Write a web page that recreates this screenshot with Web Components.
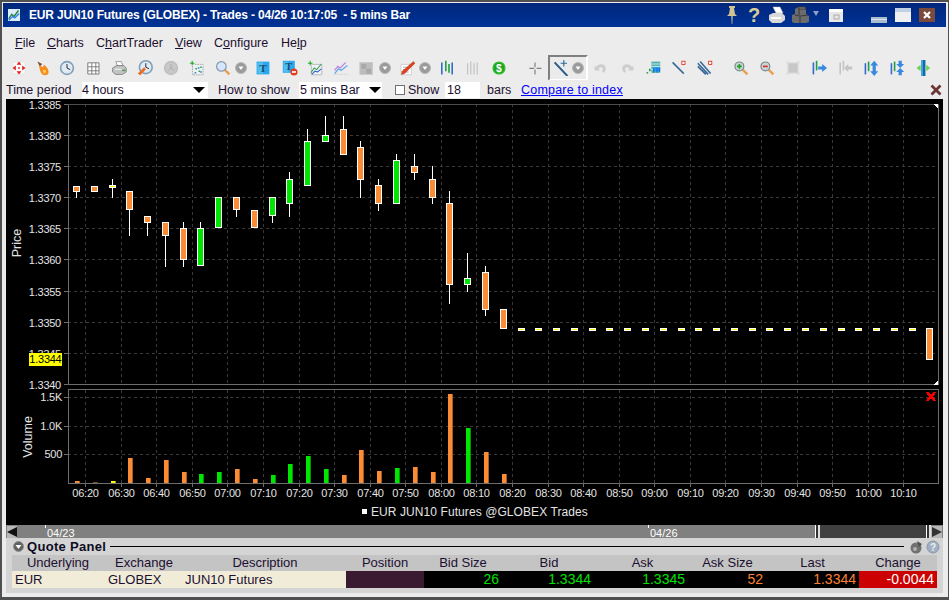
<!DOCTYPE html>
<html><head><meta charset="utf-8"><title>Trades</title>
<style>html,body{margin:0;padding:0;background:#505050;overflow:hidden}</style></head>
<body>
<trade-window>
  <title-bar slot="title">EUR JUN10 Futures (GLOBEX) - Trades - 04/26 10:17:05&nbsp; - 5 mins Bar</title-bar>
  <menu-bar slot="menu"></menu-bar>
  <tool-bar slot="tools"></tool-bar>
  <control-bar slot="controls"></control-bar>
  <price-chart slot="chart"></price-chart>
  <time-scroller slot="scroll"></time-scroller>
  <quote-panel slot="quote"></quote-panel>
</trade-window>
<script>
const FONT='"Liberation Sans",Arial,sans-serif';
const plus=(x,y)=>`<path d="M${x-1} ${y-3}h2v2h2v2h-2v2h-2v-2h-2v-2h2z" fill="#28a828" stroke="#fff" stroke-width=".5"/>`;
const dd=`<circle cx="7" cy="10" r="5.5" fill="#9a9a9a" stroke="#b8b8b8"/><path d="M4.5 8.5h5L7 12z" fill="#fff"/>`;
const bars=(a,b)=>`<path d="M3.5 3v15" stroke="${a}" stroke-width="2"/><path d="M8.5 1v13M12.5 5v11" stroke="${b}" stroke-width="2"/>`;
const lens=(extra)=>`<path d="M12 12l6 6" stroke="#e8a050" stroke-width="3"/><circle cx="8" cy="8" r="5.5" fill="#c8d4d8" stroke="#7a8a8a" stroke-width="1.5"/>${extra}`;
const ICONS={
move:`<rect x="2.5" y="2.5" width="15" height="15" fill="#fafafa" stroke="#e2e2e2"/><path fill="#e02020" d="M10 2l3 4H7zM10 18l-3-4h6zM2 10l4-3v6zM18 10l-4 3V7z"/><rect x="9" y="9" width="2" height="2" fill="#e02020"/>`,
flame:`<path d="M3 2l6 3-3 3z" fill="#7a4a30"/><path d="M5 7c2 0 3 2 5 2l1-3c3 2 6 5 6 9 0 3-2 4-5 4-4 0-6-5-7-12z" fill="#f58a1f"/><path d="M10 12c1 1 3 1 3 0 1 2 1 5-1 5-2 0-2-3-2-5z" fill="#ffd060"/>`,
clock:`<circle cx="10" cy="10" r="8" fill="#dfeaf3" stroke="#7f9fb8" stroke-width="2"/><path d="M10 5v5l4 2" fill="none" stroke="#223" stroke-width="1.2"/>`,
grid:`<path d="M3.5 3.5h14v14h-14zM8.5 3.5v14M13.5 3.5v14M3.5 8.5h14M3.5 13.5h14" fill="#fff" stroke="#666"/>`,
printer:`<path fill="#fff" stroke="#888" d="M6 2h7l2 5H8z"/><path fill="#c4c4c4" stroke="#777" d="M2 10l5-3h9l3 3v5l-5 3H6l-4-3z"/><path fill="#49a049" d="M14 12h4v2h-4z"/><path fill="#fff" d="M5 11h8v1H5z"/>`,
clockor:`<circle cx="11" cy="9" r="8" fill="#dfeaf3" stroke="#7f9fb8" stroke-width="2"/><path d="M11 4v5l4 2" fill="none" stroke="#223" stroke-width="1.2"/><path d="M1 17l8-8 2 3-7 7z" fill="#f06a20"/>`,
gclock:`<circle cx="10" cy="10" r="8" fill="#c8c8c8" stroke="#c0c0c0" stroke-width="2"/><path d="M10 5v5l-3 3M10 10l4 3" fill="none" stroke="#aaa" stroke-width="1.2"/>`,
scatter:`<path d="M4.5 5.5h13v13h-13z" fill="#eef2f6" stroke="#9a9a9a" stroke-dasharray="2 1"/><path d="M7 15h2v2H7zM11 9h2v2h-2zM14 14h2v2h-2z" fill="#2a8ad0"/><path d="M8 10h2v2H8zM12 13h2v2h-2zM14 8h2v2h-2z" fill="#30a050"/>${plus(4,4)}`,
mag:`<path d="M12 12l6 6" stroke="#e8a050" stroke-width="3"/><circle cx="8" cy="8" r="6" fill="#d4e6ff" stroke="#8a9aa8" stroke-width="1.5"/>`,
T:`<rect x="2" y="2" width="16" height="16" fill="#2aa8ee"/><rect x="3" y="3" width="7" height="14" fill="#4cc0f6"/><text x="10" y="15" text-anchor="middle" font-family="Liberation Serif" font-weight="700" font-size="14" fill="#204a68">T</text>`,
Tm:`<rect x="1" y="1" width="15" height="15" fill="#2aa8ee"/><rect x="2" y="2" width="6" height="13" fill="#4cc0f6"/><text x="8.5" y="13" text-anchor="middle" font-family="Liberation Serif" font-weight="700" font-size="13" fill="#204a68">T</text><circle cx="15" cy="15" r="4.5" fill="#e04020"/><path d="M12.5 14h5v2h-5z" fill="#fff"/>`,
chartp:`<path d="M5.5 5.5h13v13h-13z" fill="#eef2f6" stroke="#b0b0b0"/><path d="M5 16l4-6 3 2 6-7" fill="none" stroke="#30a050" stroke-width="1.3"/><path d="M6 18l4-4 3 1 5-4" fill="none" stroke="#3060d0" stroke-width="1.3"/>${plus(4,4)}`,
chartv:`<path d="M2 13l4-5 3 2 7-7" fill="none" stroke="#c080e0" stroke-width="1.6"/><path d="M2 17l5-6 3 2 8-6" fill="none" stroke="#60a8f0" stroke-width="1.6"/><path d="M1 18h18" stroke="#d8d8d8"/>`,
gsq:`<rect x="1" y="3" width="16" height="15" fill="#bcbcbc" stroke="#c8c8c8"/><path d="M3 5h6v6H3zM9 11h6v6H9z" fill="#a8a8a8"/>`,
pencil:`<path d="M2.5 5.5h13v13h-13z" fill="#fff" stroke="#c8c8c8"/><path d="M5 15h7M5 12h5M5 9h5" stroke="#9a9a9a"/><path d="M18 2l2 2L7 17l-4 1 1-4z" fill="#e0401c" stroke="#9a2a10" stroke-width=".5"/>`,
barsc:bars('#3868d0','#20a040')+`<path d="M16.5 3v15" stroke="#3868d0" stroke-width="2"/>`,
barsg:`<path d="M4.5 4v14M8.5 2v16M12.5 4v14M16.5 3v15" stroke="#c4c4c4" stroke-width="1.5"/>`,
dollar:`<circle cx="10" cy="10" r="7.500" fill="#1ea51e" stroke="#30c030" stroke-width="1.5"/><text x="10" y="14.500" text-anchor="middle" font-family="Liberation Sans" font-weight="700" font-size="13" fill="#fff">$</text>`,
cross:`<path d="M10 3v6M10 12v6M3 10.5h6M12 10.5h6" stroke="#808080" stroke-width="1.5"/>`,
linet:`<path d="M2 3l16 17" stroke="#2a5a88" stroke-width="2.4"/><path d="M13.500 0v8M9.500 4h8" stroke="#2a6a98" stroke-width="1.4"/>`,
undo:`<path d="M4 9c2-5 12-5 12 2 0 3-2 4-3 5l-2-2c1-1 2-2 1-4-2-2-4-1-5 1l2 2H2V7z" fill="#cdcdcd"/>`,
redo:`<path d="M16 9c-2-5-12-5-12 2 0 3 2 4 3 5l2-2c-1-1-2-2-1-4 2-2 4-1 5 1l-2 2h7V7z" fill="#cdcdcd"/>`,
table:`<path d="M8 2h11v14H8z" fill="#50b0b0"/><path d="M8 5h11M8 8h11M8 12h11" stroke="#e4f4f4"/><path d="M10 9h9v5h-9z" fill="#20a0f0"/><path d="M11 10v6M15 10v6M18 10v5" stroke="#1050e0"/><path d="M2 17h2v-2H2zM5 14h2v-3H5z" fill="#20a040"/>`,
linebox:`<path d="M2 3l14 14" stroke="#3a6a98" stroke-width="2"/><rect x="13.5" y="1.5" width="4" height="4" fill="#fff" stroke="#e02010"/>`,
dblbox:`<path d="M1 4l13 14M4 2l13 15M1 8l10 10" stroke="#3a6a98" stroke-width="2"/><rect x="14.5" y="1.5" width="4" height="4" fill="#fff" stroke="#e02010"/>`,
zplus:lens(`<path d="M5 8h6M8 5v6" stroke="#20a020" stroke-width="2"/>`),
zminus:lens(`<path d="M5 8h6" stroke="#e03020" stroke-width="2"/>`),
gsq2:`<rect x="4" y="4" width="12" height="12" fill="#c8c8c8"/><path d="M1 3.5h18M1 16.5h18M3.5 1v18M16.5 1v18" stroke="#d8d8d8"/>`,
barsr:`<path d="M3 3v15" stroke="#3868d0" stroke-width="2"/><path d="M7 1v12" stroke="#20a040" stroke-width="2"/><path d="M9 8h5V5l6 5-6 5v-3H9z" fill="#3888e0"/>`,
barsl:`<path d="M4 3v15M8 1v12" stroke="#c4c4c4" stroke-width="2"/><path d="M19 8h-5V5l-5 5 5 5v-3h5z" fill="#c4c4c4"/>`,
barsud:`<path d="M3 4v14" stroke="#3868d0" stroke-width="2"/><path d="M7 2v12" stroke="#20a040" stroke-width="2"/><path d="M14 1l5 6h-3v7h3l-5 6-5-6h3V7H9z" fill="#3888e0"/>`,
barsud2:`<path d="M3 4v14" stroke="#3868d0" stroke-width="2"/><path d="M7 2v12" stroke="#20a040" stroke-width="2"/><path d="M12 1h4v4h3l-5 5-5-5h3zM14 10l5 5h-3v4h-4v-4H9z" fill="#3888e0"/>`,
split:`<rect x="8" y="0" width="5" height="20" fill="#106aa8"/><rect x="8" y="0" width="2" height="20" fill="#38a8e0"/><path d="M7 6v8l-5-4z" fill="#70d050"/><path d="M14 6v8l5-4z" fill="#70d050"/>`,
dd
};
class ToolIcon extends HTMLElement{connectedCallback(){
 const n=this.getAttribute('name'),isd=n==='dd',w=isd?14:20;
 this.attachShadow({mode:'open'}).innerHTML=`<style>:host{display:flex;align-items:center;justify-content:center;flex:none;width:${w}px;height:20px}svg{display:block;flex:none}</style><svg width="${isd?14:16}" height="${isd?20:16}" viewBox="0 0 ${w} 20">${ICONS[n]}</svg>`;
}}
customElements.define('tool-icon',ToolIcon);

class TitleBar extends HTMLElement{constructor(){super();this.attachShadow({mode:'open'}).innerHTML=`<style>
:host{display:flex;align-items:center;height:24px;background:linear-gradient(#00277c,#003296);color:#fff;font:bold 12px ${FONT};letter-spacing:-.17px;white-space:pre}
.logo{width:12px;height:12px;margin:0 9px 0 5px;flex:none}
.t{flex:1;min-width:0}
svg{display:block;flex:none}
</style>
<svg class="logo" viewBox="0 0 16 16"><rect width="16" height="16" fill="#dcecf8"/><path d="M1 13l4-6 3 3 6-8" fill="none" stroke="#208040" stroke-width="1.8"/><path d="M1 15l5-5 3 2 6-6" fill="none" stroke="#3080f0" stroke-width="1.8"/></svg>
<span class="t"><slot></slot></span>
<svg width="12" height="20" viewBox="0 0 12 20" style="margin-right:7px"><path d="M3 1h6v2H8l1 6 2 2H1l2-2 1-6H3zM5.300 11h1.400l-.4 8h-.6z" fill="#cfc391"/></svg>
<svg width="18" height="20" viewBox="0 0 18 20" style="margin-right:5px"><text x="9" y="17" text-anchor="middle" font-family="Liberation Sans" font-weight="700" font-size="20" fill="#d8cc98">?</text></svg>
<svg width="18" height="18" viewBox="0 0 18 18" style="margin-right:6px"><path d="M5 1h7l3 6H8z" fill="#fff" stroke="#bbb" stroke-width=".5"/><path d="M1 9l4-2h9l3 3v4l-4 3H4l-3-3z" fill="#d8d8d8"/><path d="M3 11h10v2H3z" fill="#fff"/></svg>
<svg width="18" height="18" viewBox="0 0 18 18" style="margin-right:3px"><path d="M6 1h7l1 2v5l3 2v6l-3 1H2l-2-1v-7l3-1V3z" fill="#6c6c6c"/><path d="M6 1h7l1 2H7zM8 9v8M3 9l4 1M9 10l7-1M7 3v6" fill="#8a8a8a" stroke="#383838"/></svg>
<svg width="6" height="5" viewBox="0 0 6 5" style="margin:-4px 10px 0 0"><path d="M0 0h6L3 5z" fill="#8ea0c8"/></svg>
<svg width="14" height="13" viewBox="0 0 14 13" style="margin-right:28px"><rect width="14" height="13" fill="#e8e8e8"/><rect y="0" width="14" height="3" fill="#fff"/><rect x="5" y="6" width="5" height="4" fill="none" stroke="#aaa"/></svg>
<svg width="16" height="6" viewBox="0 0 16 6" style="margin:9px 8px 0 0"><rect width="16" height="6" fill="#a8bcd0"/><rect y="2" width="16" height="1" fill="#dce4ec"/></svg>
<svg width="16" height="14" viewBox="0 0 16 14" style="margin-right:8px"><rect width="16" height="14" fill="#f0f0f0"/><rect width="16" height="4" fill="#c0d0e4"/></svg>
<svg width="16" height="14" viewBox="0 0 16 14" style="margin-right:11px"><rect width="16" height="14" fill="#7a4a3c"/><path d="M5 4l6 6M11 4l-6 6" stroke="#fff" stroke-width="2.2"/></svg>`;
}}
customElements.define('title-bar',TitleBar);

class MenuBar extends HTMLElement{constructor(){super();
 const items=[['<u>F</u>ile',32],['<u>C</u>harts',49],['C<u>h</u>artTrader',79],['<u>V</u>iew',39],['C<u>o</u>nfigure',67],['He<u>l</u>p',30]];
 this.attachShadow({mode:'open'}).innerHTML=`<style>
:host{display:flex;align-items:center;height:29px;padding:2px 0 0 12px;box-sizing:border-box;font:12.5px ${FONT};color:#1c0f30;background:#ececec}
span{display:block;flex:none}</style>`+items.map(([t,w])=>`<span style="width:${w}px">${t}</span>`).join('');
}}
customElements.define('menu-bar',MenuBar);

class ToolBar extends HTMLElement{constructor(){super();
 const L=[['move',19],['flame',43],['clock',67],['grid',93],['printer',119],['clockor',145],['gclock',171],['scatter',197],['mag',223],['dd',241],['T',263],['Tm',290],['chartp',315],['chartv',341],['gsq',367],['dd',385],['pencil',407],['dd',425],['barsc',447],['barsg',472],['dollar',499],['cross',535],['SEL',568],['undo',601],['redo',627],['table',653],['linebox',679],['dblbox',705],['zplus',741],['zminus',767],['gsq2',793],['barsr',819],['barsl',845],['barsud',871],['barsud2',897],['split',923]];
 let r=3,h='';
 for(const [n,c] of L){
  const w=n==='dd'?14:n==='SEL'?40:20,ml=c-w/2-r;r=c+w/2;
  if(n==='SEL')h+=`<div class="sel" style="margin-left:${ml}px"><tool-icon name="linet"></tool-icon><tool-icon name="dd"></tool-icon></div>`;
  else h+=`<tool-icon name="${n}" style="margin-left:${ml}px"></tool-icon>`;
 }
 this.attachShadow({mode:'open'}).innerHTML=`<style>
:host{display:flex;align-items:center;height:24px;background:#ececec}
.sel{display:flex;align-items:center;box-sizing:border-box;width:40px;height:26px;flex:none;border:2px solid;border-color:#808080 #fff #fff #808080;padding-left:1px;background:#ebebeb}
</style>${h}`;
}}
customElements.define('tool-bar',ToolBar);

class ComboBox extends HTMLElement{constructor(){super();this.attachShadow({mode:'open'}).innerHTML=`<style>
:host{display:flex;align-items:center;justify-content:space-between;height:16px;background:#fff;padding:0 1px 0 0;box-sizing:border-box;flex:none}
i{width:0;height:0;border:6px solid transparent;border-top:6px solid #000;border-bottom:0}
</style><slot></slot><i></i>`;
}}
customElements.define('combo-box',ComboBox);

class ControlBar extends HTMLElement{constructor(){super();this.attachShadow({mode:'open'}).innerHTML=`<style>
:host{display:flex;align-items:center;height:19px;padding-top:1px;box-sizing:border-box;background:#ececec;font:12.5px ${FONT};color:#1c0f30}
span,a{display:block;flex:none;white-space:nowrap}
.box{width:8px;height:8px;border:1px solid #707070;background:#fff;flex:none}
.inp{width:35px;height:16px;background:#fff;padding-left:2px;box-sizing:border-box;line-height:16px}
a{color:#0000ff;text-decoration:underline;letter-spacing:.2px}
svg{display:block;flex:none}
</style>
<span style="width:76px">Time period</span>
<combo-box style="width:126px;padding-right:3px">4 hours</combo-box>
<span style="margin-left:10px;width:81px">How to show</span>
<combo-box style="width:83px;padding-left:1px">5 mins Bar</combo-box>
<div class="box" style="margin-left:13px"></div>
<span style="margin-left:3px;width:37px">Show</span>
<span class="inp">18</span>
<span style="margin-left:7px;width:34px">bars</span>
<a style="width:102px">Compare to index</a>
<svg width="12" height="12" viewBox="0 0 12 12" style="margin-left:307px"><path d="M1.500 1.500l9 9M10.500 1.500l-9 9" stroke="#6a3636" stroke-width="2.8"/></svg>`;
}}
customElements.define('control-bar',ControlBar);

class PriceChart extends HTMLElement{constructor(){super();
 const OR='#fb8c36',GR='#00e600',YE='#ffff00';
 const C=[[186,192,186,198,OR],[186,192,186,192,OR],[185,188,179,198,YE],[191,210,191,236,OR],[216,223,216,236,OR],[222,236,222,267,OR],[228,260,222,267,OR],[228,266,222,266,GR],[197,228,197,228,GR],[197,210,197,217,OR],[210,228,210,228,OR],[197,216,197,223,GR],[179,204,172,217,GR],[141,186,129,186,GR],[135,142,116,142,GR],[129,155,116,155,OR],[147,180,141,198,OR],[185,204,179,211,OR],[160,204,154,204,GR],[166,173,154,180,OR],[179,198,166,204,OR],[203,285,191,304,OR],[278,285,253,292,GR],[272,310,266,316,OR],[309,329,309,329,OR]];
 for(let i=25;i<=47;i++)C.push([328,331,328,331,YE]);
 C.push([328,360,328,360,OR]);
 const V=[[481,OR],[482,'#8a4a20'],[481,YE],[458,OR],[478,OR],[460,OR],[472,OR],[474,GR],[472,GR],[469,OR],[479,OR],[475,GR],[464,GR],[456,GR],[469,GR],[475,OR],[450,OR],[471,OR],[468,GR],[467,OR],[472,OR],[394,OR],[428,GR],[452,OR],[474,OR]];
 const cx=i=>Math.floor(76.5+17.78*i)+.5;
 const gx=[];for(let i=0;i<24;i++)gx.push(Math.round(85.2+35.57*i)+.5);
 const labels=[];for(let i=0;i<24;i++){const m=380+i*10;labels.push(String(Math.floor(m/60)).padStart(2,'0')+':'+String(m%60).padStart(2,'0'));}
 let s='';
 const py=[104,135,166,197,228,259,291,322,353,384],pl=['1.3385','1.3380','1.3375','1.3370','1.3365','1.3360','1.3355','1.3350','1.3345','1.3340'];
 py.forEach((y,i)=>{s+=`<path class="g" d="M68 ${y+.5}H938"/><path class="a" d="M64 ${y+.5}H68"/><text class="t" x="61" y="${y+4.5}" text-anchor="end">${pl[i]}</text>`;});
 gx.forEach(x=>{s+=`<path class="g" d="M${x} 104V384M${x} 390V483"/><path class="a" d="M${x} 483V487"/>`;});
 [[397,'1.5K'],[426,'1.0K'],[454,'500']].forEach(([y,t])=>{s+=`<path class="g" d="M68 ${y+.5}H938"/><path class="a" d="M64 ${y+.5}H68"/><text class="t" x="62" y="${y+4}" text-anchor="end">${t}</text>`;});
 s+=`<path class="a" d="M68.500 104V385M938.500 104V385M68 384.500H939M68.500 390V484M938.500 390V484M68 389.500H939M68 483.500H939"/><path class="a2" d="M68 104.500H939"/>`;
 gx.forEach((x,i)=>{s+=`<text class="t" x="${x}" y="497" text-anchor="middle">${labels[i]}</text>`;});
 C.forEach(([t,b,wt,wb,col],i)=>{const x=cx(i);
  if(wt<t||wb>b)s+=`<path class="w" d="M${x} ${wt}V${wb}"/>`;
  s+=`<rect x="${x-3}" y="${t+.5}" width="6" height="${b-t-1}" fill="${col}" stroke="#fff"/>`;});
 V.forEach(([t,col],i)=>{const x=Math.floor(cx(i))-1;s+=`<rect x="${x}" y="${t}" width="5" height="${483-t}" fill="${col}"/><path d="M${x+4.5} ${t}V483" stroke="#000" stroke-opacity=".35"/>`;});
 s+=`<rect x="29" y="353" width="33" height="13" fill="#ffff00"/><text x="61.500" y="363" text-anchor="end" class="t" style="fill:#000">1.3344</text>`;
 s+=`<path d="M938 104v5l-4-5zM938 380v5h-5z" fill="#fff"/><path d="M927 392l8 9M935 392l-8 9" stroke="#ee0000" stroke-width="2.600"/>`;
 s+=`<text class="t" transform="translate(21 243) rotate(-90)" text-anchor="middle" style="font-size:12.500px;letter-spacing:0">Price</text><text class="t" transform="translate(32 437) rotate(-90)" text-anchor="middle" style="font-size:12.500px;letter-spacing:0">Volume</text>`;
 s+=`<rect x="362" y="509" width="5" height="5" fill="#fff"/><text class="t" x="371" y="516" style="font-size:12px;letter-spacing:.08px">EUR JUN10 Futures @GLOBEX Trades</text>`;
 this.attachShadow({mode:'open'}).innerHTML=`<style>
:host{display:block;height:426px;background:#000}
svg{display:block;shape-rendering:crispEdges}
.g{stroke:#3a3a3a;stroke-dasharray:3 3;fill:none}
.a{stroke:#6e6e6e;fill:none}.a2{stroke:#4c4c4c;fill:none}
.w{stroke:#fff;fill:none}
text{font:11px ${FONT};letter-spacing:-.25px;fill:#e4e4e4;shape-rendering:auto}
</style><svg width="937" height="426" viewBox="6 99 937 426">${s}</svg>`;
}}
customElements.define('price-chart',PriceChart);

class TimeScroller extends HTMLElement{constructor(){super();this.attachShadow({mode:'open'}).innerHTML=`<style>
:host{display:flex;height:13px;background:#808080;font:11px ${FONT};color:#fff;overflow:hidden}
.arrow{width:10px;flex:none;background:#b8b8b8;margin-top:1px;display:flex;align-items:center;justify-content:center}
.d{flex:none;border-left:1px solid #fff;height:3px;line-height:17px;white-space:nowrap;width:60px}
.d b{font-weight:400;display:block;margin-left:1px}
.handle{width:5px;flex:none;background:linear-gradient(90deg,#fff 0 1px,#333 1px 3px,#ddd 3px 5px)}
.thumb{width:106px;flex:none;background:#404040}
svg{display:block}
</style>
<div class="arrow" style="margin-left:1px"><svg width="10" height="10" viewBox="0 0 10 10"><path d="M10 0v10L0 5z" fill="#111"/></svg></div>
<div class="d" style="margin-left:28px"><b>04/23</b></div>
<div class="d" style="margin-left:542px"><b>04/26</b></div>
<div style="width:106px;flex:none"></div>
<div class="handle"></div><div class="thumb"></div><div class="handle"></div>
<div class="arrow" style="width:11px"><svg width="10" height="10" viewBox="0 0 10 10"><path d="M0 0v10l10-5z" fill="#333"/></svg></div>`;
}}
customElements.define('time-scroller',TimeScroller);

class QuotePanel extends HTMLElement{constructor(){super();
 const cols='92px 80px 162px 78px 78px 94px 93px 77px 93px 78px';
 const hd=['Underlying','Exchange','Description','Position','Bid Size','Bid','Ask','Ask Size','Last','Change'];
 const rows=[['EUR','l 3'],['GLOBEX','l 4'],['JUN10 Futures','l 1'],['','p'],['26','r 3 #00e000'],['1.3344','r 5 #00e000'],['1.3345','r 4 #00e000'],['52','r 3 #ff8030'],['1.3344','r 3 #ff8030'],['-0.0044','r 3 #fff']];
 this.attachShadow({mode:'open'}).innerHTML=`<style>
:host{display:block;background:#d4d4d4;height:55px;font:13px ${FONT};color:#1c0f30}
.head{display:flex;align-items:center;height:17px;padding-left:7px;padding-right:3px}
.head b{font-size:13px;margin-left:3px;letter-spacing:.3px;white-space:nowrap;color:#0c0c24}
.line{flex:1;height:1px;background:#000;margin:0 5px 0 4px}
svg{display:block;flex:none}
.t{display:grid;grid-template-columns:${cols};margin-left:6px;width:925px}
.h{height:16px;line-height:16px;background:#c4c4c4;text-align:center;white-space:nowrap}
.c{height:17px;line-height:17px;white-space:nowrap}
</style>
<div class="head">
<svg width="11" height="11" viewBox="0 0 11 11"><circle cx="5.500" cy="5.500" r="5" fill="#606060" stroke="#909090"/><path d="M2.500 4h6l-3 4z" fill="#fff"/></svg>
<b>Quote Panel</b><div class="line"></div>
<svg width="14" height="14" viewBox="0 0 14 14" style="margin-right:3px"><circle cx="7" cy="8" r="5.500" fill="#707070"/><path d="M8 1l5 3-3 3z" fill="#505050"/><circle cx="6" cy="9" r="2" fill="#b0b0b0"/></svg>
<svg width="14" height="14" viewBox="0 0 14 14"><circle cx="7" cy="7" r="6" fill="#a0b0c4" stroke="#8898a8"/><text x="7" y="11" text-anchor="middle" font-family="Liberation Sans" font-weight="700" font-size="10" fill="#f0f0f0">?</text></svg>
</div>
<div class="t">${hd.map(h=>`<div class="h">${h}</div>`).join('')}${rows.map(([t,m],i)=>{
  const [a,p,col]=m.split(' ');
  let bg='#000';if(i<3)bg='#f0ecd8';if(i===3)bg='#3a1a30';if(i===9)bg='#cc0000';
  return `<div class="c" style="background:${bg};text-align:${a==='r'?'right':'left'};padding:0 ${a==='r'?p:0}px 0 ${a==='l'?p:0}px;color:${col||'#1c0f30'};font-size:${a==='r'?14:13}px">${t}</div>`;
 }).join('')}</div>`;
}}
customElements.define('quote-panel',QuotePanel);

class TradeWindow extends HTMLElement{constructor(){super();this.attachShadow({mode:'open'}).innerHTML=`<style>
:host{display:block;width:949px;height:600px;box-sizing:border-box;border:solid #505050;border-width:2px 1px 3px 2px;background:#ececec;overflow:hidden}
.frame{padding:1px 2px 0 1px;height:100%;box-sizing:border-box;display:flex;flex-direction:column}
.body{flex:1;padding:0 3px 4px 3px;min-height:0;display:flex;flex-direction:column}
.edge{margin:0 -3px}
</style><div class="frame"><slot name="title"></slot><div class="body">
<div class="edge"><slot name="menu"></slot></div>
<div class="edge"><slot name="tools"></slot></div>
<slot name="controls"></slot><slot name="chart"></slot><slot name="scroll"></slot><slot name="quote"></slot></div></div>`;
}}
customElements.define('trade-window',TradeWindow);
</script>
</body></html>
